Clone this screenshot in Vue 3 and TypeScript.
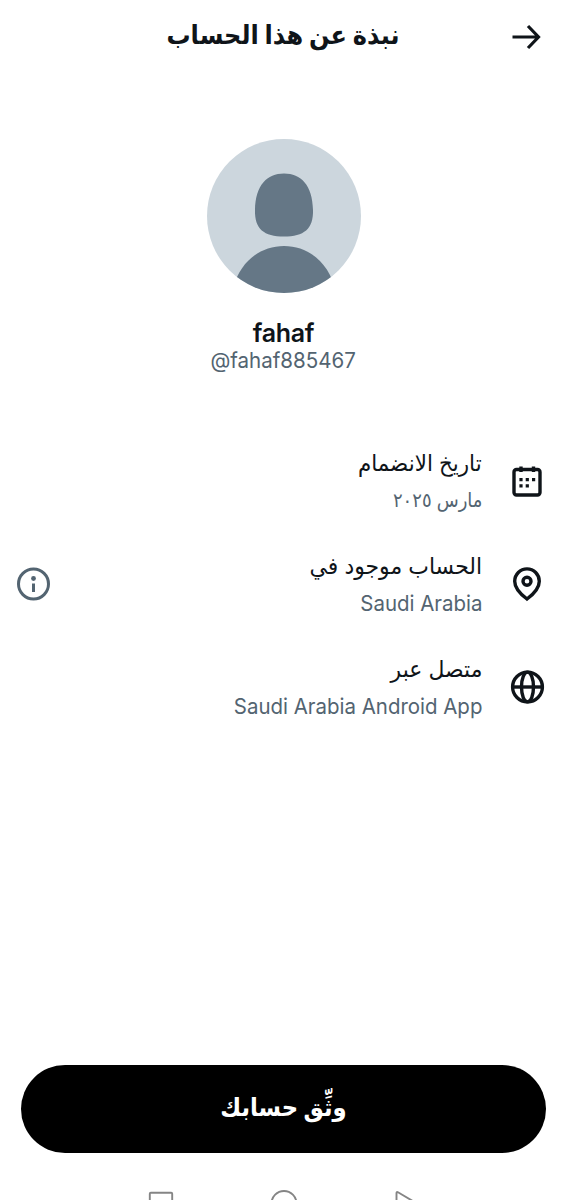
<script setup lang="ts">
interface InfoRow {
  id: 'joined' | 'location' | 'connected'
  label: string
  value: string
  latin: boolean
  info: boolean
}

const rows: InfoRow[] = [
  { id: 'joined', label: 'تاريخ الانضمام', value: 'مارس ٢٠٢٥', latin: false, info: false },
  { id: 'location', label: 'الحساب موجود في', value: 'Saudi Arabia', latin: true, info: true },
  { id: 'connected', label: 'متصل عبر', value: 'Saudi Arabia Android App', latin: true, info: false },
]
</script>

<template>
  <main class="screen" dir="rtl">
    <header class="top">
      <svg class="back" width="32" height="32" viewBox="0 0 32 32">
        <path d="M2.500 16H28.500M18 5 28.500 16 18 27" />
      </svg>
      <h1 class="title"><span>نبذة عن هذا الحساب</span></h1>
    </header>

    <section class="profile">
      <svg class="avatar" width="154" height="154" viewBox="0 0 154 154">
        <defs>
          <clipPath id="avatar-circle"><circle cx="77" cy="77" r="77" /></clipPath>
        </defs>
        <g clip-path="url(#avatar-circle)">
          <rect width="154" height="154" fill="#ccd6dd" />
          <path d="M77 34.500C94 34.500 105.500 46 106 71C106.500 90 97 97.500 77 97.500S47.500 90 48 71C48.500 46 60 34.500 77 34.500Z" fill="#657786" />
          <path d="M24 160C28 127 50 107 77 107S126 127 130 160Z" fill="#657786" />
        </g>
      </svg>
      <div class="name" dir="ltr">fahaf</div>
      <div class="handle" dir="ltr">@fahaf885467</div>
    </section>

    <section class="rows">
      <div v-for="row in rows" :key="row.id" class="row" :class="row.id">
        <svg class="icon" width="36" height="36" viewBox="0 0 36 36">
          <template v-if="row.id === 'joined'">
            <rect x="5" y="6.500" width="26" height="25.500" rx="2.500" />
            <path d="M12 3.500V9M24.500 3.500V9" />
            <path class="solid" d="M10.400 15h3.200v3.200h-3.200zM16.700 15h3.200v3.200h-3.200zM23 15h3.200v3.200H23zM10.400 21.300h3.200v3.200h-3.200zM16.700 21.300h3.200v3.200h-3.200z" />
          </template>
          <template v-else-if="row.id === 'location'">
            <path d="M18 33C12 28.500 5.700 22.500 5.700 15.200A12.300 12.300 0 0 1 30.300 15.200C30.300 22.500 24 28.500 18 33Z" />
            <circle cx="18" cy="15.300" r="4" />
          </template>
          <template v-else>
            <circle cx="18.500" cy="18" r="14.900" />
            <ellipse cx="18.500" cy="18" rx="6" ry="14.900" />
            <path d="M3.600 18H33.400" />
          </template>
        </svg>
        <div class="text">
          <div class="label"><span>{{ row.label }}</span></div>
          <div class="value" :class="{ latin: row.latin }"><span>{{ row.value }}</span></div>
        </div>
        <svg v-if="row.info" class="info" width="34" height="34" viewBox="0 0 34 34">
          <circle cx="16.500" cy="17" r="15" />
          <circle class="dot" cx="16.500" cy="11.500" r="2.400" />
          <path d="M16.500 16.500V25" />
        </svg>
      </div>
    </section>

    <button class="verify" type="button"><span>وثِّق حسابك</span></button>

    <footer class="nav">
      <svg width="572" height="11" viewBox="0 0 572 11">
        <rect x="149.800" y="3.800" width="22.400" height="22" rx="1" />
        <circle cx="284" cy="14.500" r="12.500" />
        <path d="M396.500 26V4Q396.500 2.500 398 3.300L417 14.500 398 26Z" />
      </svg>
    </footer>
  </main>
</template>

<style>
body {
  background: #fff;
}
</style>

<style scoped>
.screen {
  box-sizing: border-box;
  width: 572px;
  height: 1200px;
  overflow: hidden;
  display: flex;
  flex-direction: column;
  background: #fff;
  color: #0f1419;
  font-family: Inter, "DejaVu Sans", sans-serif;
}
svg {
  display: block;
  flex: none;
}
.top {
  height: 72px;
  flex: none;
  display: grid;
  grid-template-columns: 1fr auto 1fr;
  padding: 0 30px 0 25px;
}
.back {
  margin-top: 21px;
  fill: none;
  stroke: #0f1419;
  stroke-width: 3.200;
}
.title {
  margin: 0;
  font-size: 26px;
  line-height: 69px;
  font-weight: 700;
  white-space: nowrap;
}
.title span,
.label span,
.value span,
.verify span {
  display: inline-block;
  transform-origin: right center;
}
.title span {
  transform: scaleX(0.925);
  transform-origin: center;
}
.profile {
  display: flex;
  flex-direction: column;
  align-items: center;
  height: 368px;
  flex: none;
  padding: 67px 5px 0 0;
  box-sizing: border-box;
}
.name {
  margin-top: 25px;
  font-size: 25px;
  line-height: 30px;
  font-weight: 600;
  letter-spacing: -0.3px;
}
.handle {
  font-size: 21.500px;
  line-height: 24px;
  color: #536471;
  transform: scaleX(0.955);
}
.rows {
  flex: none;
}
.row {
  display: flex;
  align-items: flex-start;
  height: 103px;
  padding: 0 27px 0 17px;
}
.icon {
  margin-top: 23px;
  fill: none;
  stroke: #0f1419;
  stroke-width: 3.400;
}
.solid {
  fill: #0f1419;
  stroke: none;
}
.text {
  flex: 1;
  padding-right: 27px;
}
.label {
  height: 44px;
  line-height: 46px;
  font-size: 23px;
  white-space: nowrap;
}
.label span {
  transform: scaleX(0.953);
}
.joined .label span {
  transform: scaleX(0.933);
}
.value {
  height: 32px;
  line-height: 32px;
  font-size: 20px;
  color: #536471;
  white-space: nowrap;
}
.value span {
  transform: scaleX(0.9);
}
.value.latin {
  font-size: 21.500px;
}
.value.latin span {
  transform: scaleX(0.951);
}
.info {
  margin-top: 24px;
  fill: none;
  stroke: #536471;
  stroke-width: 3;
}
.info .dot {
  fill: #536471;
  stroke: none;
}
.verify {
  margin: auto 26px 0 21px;
  height: 88px;
  flex: none;
  border: 0;
  padding: 0 0 5px;
  border-radius: 44px;
  background: #000;
  color: #fff;
  font: 700 25px Inter, "DejaVu Sans", sans-serif;
}
.verify span {
  transform: scaleX(0.91);
  transform-origin: center;
}
.nav {
  margin-top: 36px;
  height: 11px;
  flex: none;
}
.nav svg {
  fill: none;
  stroke: #858585;
  stroke-width: 1.900;
}
</style>
